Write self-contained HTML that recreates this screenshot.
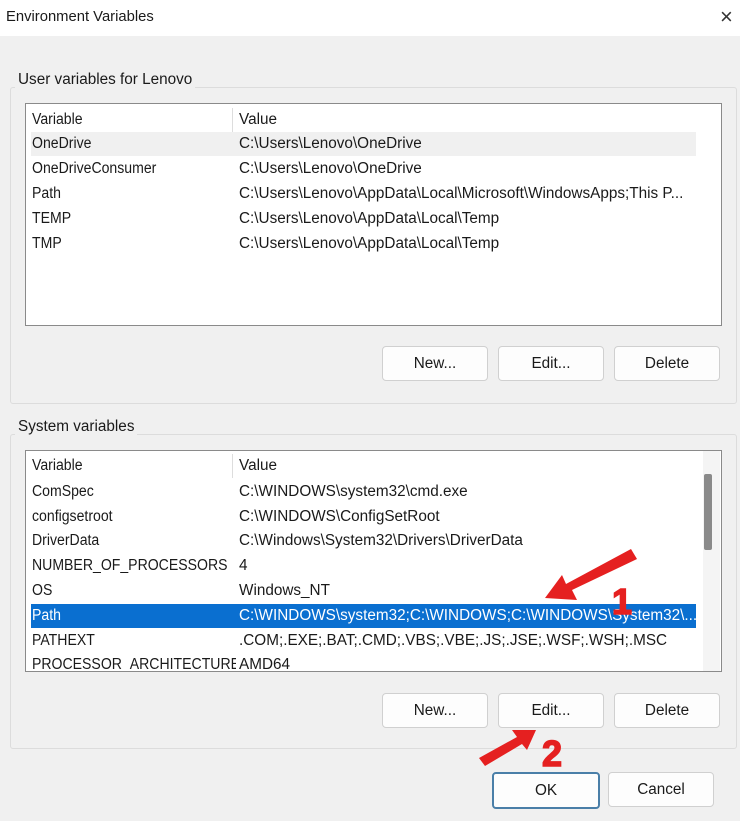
<!DOCTYPE html>
<html><head><style>
body{margin:0;width:740px;height:821px;background:#f0f0f0;font-family:"Liberation Sans",sans-serif;font-size:15.3px;color:#1a1a1a;position:relative;overflow:hidden}
.abs{position:absolute}
.title{left:0;top:0;width:740px;height:36px;background:#fff}
.grp{border:1px solid #dcdcdc;border-radius:3px}
.lbl{background:#f0f0f0;padding:0 3px}
.list{background:#fff;border:1px solid #8a8a8a;overflow:hidden}
.row{position:absolute;left:5px;height:24px;line-height:24px;width:665px;white-space:nowrap}
.row b{font-weight:normal;position:absolute;left:1px;top:0;width:204px;overflow:hidden}
.row b i{font-style:normal;display:inline-block;transform:scaleX(0.92);transform-origin:0 50%}
.row span{position:absolute;left:208px;top:0;white-space:nowrap}
.btn{background:#fdfdfd;border:1px solid #d0d0d0;border-radius:4px;text-align:center;line-height:33px}
</style></head><body>
<div class="abs title"></div>
<div class="abs" style="left:6px;top:9px;font-size:14.8px">Environment Variables</div>
<div class="abs" style="left:720px;top:4px;font-size:22px;color:#333">×</div>

<div class="abs grp" style="left:10px;top:87px;width:725px;height:315px"></div>
<div class="abs lbl" style="left:15px;top:71px">User variables for Lenovo</div>
<div class="abs list" style="left:25px;top:103px;width:695px;height:221px">
 <div class="abs" style="left:206px;top:4px;width:1px;height:24px;background:#ddd"></div>
 <div class="row" style="top:4px"><b><i>Variable</i></b><span>Value</span></div>
 <div class="row" style="top:28px;background:#f0f0f0"><b><i>OneDrive</i></b><span>C:\Users\Lenovo\OneDrive</span></div>
 <div class="row" style="top:53px"><b><i>OneDriveConsumer</i></b><span>C:\Users\Lenovo\OneDrive</span></div>
 <div class="row" style="top:78px"><b><i>Path</i></b><span>C:\Users\Lenovo\AppData\Local\Microsoft\WindowsApps;This P...</span></div>
 <div class="row" style="top:103px"><b><i>TEMP</i></b><span>C:\Users\Lenovo\AppData\Local\Temp</span></div>
 <div class="row" style="top:128px"><b><i>TMP</i></b><span>C:\Users\Lenovo\AppData\Local\Temp</span></div>
</div>
<div class="abs btn" style="left:382px;top:346px;width:104px;height:33px">New...</div>
<div class="abs btn" style="left:498px;top:346px;width:104px;height:33px">Edit...</div>
<div class="abs btn" style="left:614px;top:346px;width:104px;height:33px">Delete</div>

<div class="abs grp" style="left:10px;top:434px;width:725px;height:313px"></div>
<div class="abs lbl" style="left:15px;top:418px">System variables</div>
<div class="abs list" style="left:25px;top:450px;width:695px;height:220px">
 <div class="abs" style="left:206px;top:3px;width:1px;height:24px;background:#ddd"></div>
 <div class="row" style="top:3px"><b><i>Variable</i></b><span>Value</span></div>
 <div class="row" style="top:29px"><b><i>ComSpec</i></b><span>C:\WINDOWS\system32\cmd.exe</span></div>
 <div class="row" style="top:54px"><b><i>configsetroot</i></b><span>C:\WINDOWS\ConfigSetRoot</span></div>
 <div class="row" style="top:78px"><b><i>DriverData</i></b><span>C:\Windows\System32\Drivers\DriverData</span></div>
 <div class="row" style="top:103px"><b><i>NUMBER_OF_PROCESSORS</i></b><span>4</span></div>
 <div class="row" style="top:128px"><b><i>OS</i></b><span>Windows_NT</span></div>
 <div class="row" style="top:153px;background:#0a6fd0;color:#fff"><b><i>Path</i></b><span>C:\WINDOWS\system32;C:\WINDOWS;C:\WINDOWS\System32\...</span></div>
 <div class="row" style="top:178px"><b><i>PATHEXT</i></b><span>.COM;.EXE;.BAT;.CMD;.VBS;.VBE;.JS;.JSE;.WSF;.WSH;.MSC</span></div>
 <div class="row" style="top:202px"><b><i>PROCESSOR_ARCHITECTURE</i></b><span>AMD64</span></div>
 <div class="abs" style="left:677px;top:0;width:17px;height:220px;background:#f4f4f4"></div>
 <div class="abs" style="left:678px;top:23px;width:8px;height:76px;background:#8a8a8a;border-radius:2px"></div>
</div>
<div class="abs btn" style="left:382px;top:693px;width:104px;height:33px">New...</div>
<div class="abs btn" style="left:498px;top:693px;width:104px;height:33px">Edit...</div>
<div class="abs btn" style="left:614px;top:693px;width:104px;height:33px">Delete</div>

<div class="abs btn" style="left:492px;top:772px;width:104px;height:33px;border:2px solid #4a7fa8">OK</div>
<div class="abs btn" style="left:608px;top:772px;width:104px;height:33px">Cancel</div>

<svg class="abs" style="left:0;top:0" width="740" height="821">
 <polygon points="631,549 637,559 572,590 577,600 545,598 562,575 566,584" fill="#e52020"/>
 <text x="612" y="614" font-family="Liberation Sans" font-weight="bold" font-size="36" fill="#e52020" stroke="#e52020" stroke-width="1.5">1</text>
 <polygon points="485,766 479,758 517,737 512,730 536,730 527,750 522,744" fill="#e52020"/>
 <text x="542" y="766" font-family="Liberation Sans" font-weight="bold" font-size="36" fill="#e52020" stroke="#e52020" stroke-width="1.5">2</text>
</svg>
</body></html>
